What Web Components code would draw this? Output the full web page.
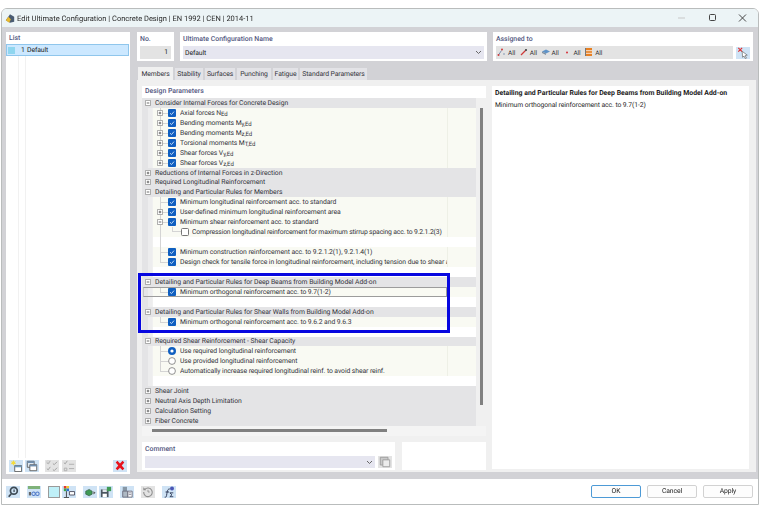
<!DOCTYPE html>
<html>
<head>
<meta charset="utf-8">
<title>Edit Ultimate Configuration</title>
<style>
  html, body { margin: 0; padding: 0; background: #fff; }
  body { font-family: Roboto, "Noto Sans", sans-serif; font-size: 6.8px; letter-spacing: -.08px; color: #33333b; text-rendering: geometricPrecision; }
  sub { font-size: 6px; vertical-align: -1px; line-height: 0; }
  tree-row[kind="head"] { letter-spacing: -.05px; }
  tree-row[level="2"] { letter-spacing: -.16px; }
</style>
</head>
<body>
<config-dialog>
  <list-panel slot="list"></list-panel>
  <tree-panel slot="tree">
    <tree-row kind="head" toggle="minus">Consider Internal Forces for Concrete Design</tree-row>
    <tree-row kind="check" toggle="plus">Axial forces N<sub>Ed</sub></tree-row>
    <tree-row kind="check" toggle="plus">Bending moments M<sub>y,Ed</sub></tree-row>
    <tree-row kind="check" toggle="plus">Bending moments M<sub>z,Ed</sub></tree-row>
    <tree-row kind="check" toggle="plus">Torsional moments M<sub>T,Ed</sub></tree-row>
    <tree-row kind="check" toggle="plus">Shear forces V<sub>y,Ed</sub></tree-row>
    <tree-row kind="check" toggle="plus" last>Shear forces V<sub>z,Ed</sub></tree-row>
    <tree-row kind="head" toggle="plus">Reductions of Internal Forces in z-Direction</tree-row>
    <tree-row kind="head" toggle="plus">Required Longitudinal Reinforcement</tree-row>
    <tree-row kind="head" toggle="minus">Detailing and Particular Rules for Members</tree-row>
    <tree-row kind="check">Minimum longitudinal reinforcement acc. to standard</tree-row>
    <tree-row kind="check" toggle="plus">User-defined minimum longitudinal reinforcement area</tree-row>
    <tree-row kind="check" toggle="minus">Minimum shear reinforcement acc. to standard</tree-row>
    <tree-row kind="uncheck" level="2">Compression longitudinal reinforcement for maximum stirrup spacing acc. to 9.2.1.2(3)</tree-row>
    <tree-row kind="blank" line></tree-row>
    <tree-row kind="check">Minimum construction reinforcement acc. to 9.2.1.2(1), 9.2.1.4(1)</tree-row>
    <tree-row kind="check" last>Design check for tensile force in longitudinal reinforcement, including tension due to shear a</tree-row>
    <tree-row kind="blank"></tree-row>
    <tree-row kind="head" toggle="minus">Detailing and Particular Rules for Deep Beams from Building Model Add-on</tree-row>
    <tree-row kind="check" last selected>Minimum orthogonal reinforcement acc. to 9.7(1-2)</tree-row>
    <tree-row kind="blank"></tree-row>
    <tree-row kind="head" toggle="minus">Detailing and Particular Rules for Shear Walls from Building Model Add-on</tree-row>
    <tree-row kind="check" last>Minimum orthogonal reinforcement acc. to 9.6.2 and 9.6.3</tree-row>
    <tree-row kind="blank"></tree-row>
    <tree-row kind="head" toggle="minus">Required Shear Reinforcement - Shear Capacity</tree-row>
    <tree-row kind="radio-on">Use required longitudinal reinforcement</tree-row>
    <tree-row kind="radio">Use provided longitudinal reinforcement</tree-row>
    <tree-row kind="radio" last>Automatically increase required longitudinal reinf. to avoid shear reinf.</tree-row>
    <tree-row kind="blank"></tree-row>
    <tree-row kind="head" toggle="plus">Shear Joint</tree-row>
    <tree-row kind="head" toggle="plus">Neutral Axis Depth Limitation</tree-row>
    <tree-row kind="head" toggle="plus">Calculation Setting</tree-row>
    <tree-row kind="head" toggle="plus">Fiber Concrete</tree-row>
  </tree-panel>
</config-dialog>

<script>
// toolbar glyphs, all on a 14x14 box
const ICONS = {
  fresh: '<path d="M5.5 6.500h8v7h-8z" fill="#fff" stroke="#555"/><path d="M5.5 6.500h8v2h-8z" fill="#6f9cc0"/><path d="M4 0l.9 2.100L7 1.400 5.700 3.200 7.300 5 5 4.700 4 6.800 3 4.700.7 5l1.600-1.800L1 1.400l2.100.7z" fill="#f5dc3c"/>',
  copy: '<path d="M1.500 1.500h8v7h-8z" fill="#dfe9f2" stroke="#555"/><path d="M1.500 1.500h8v2h-8z" fill="#6f8fb0"/><path d="M4.500 5.500h8v7h-8z" fill="#fff" stroke="#555"/><path d="M4.500 5.500h8v2h-8z" fill="#6f8fb0"/>',
  pages: '<path d="M1.500 1.500h9v9h-9z" fill="#c9c9c9" stroke="#9a9a9a"/><path d="M4.500 4.500h8v8h-8z" fill="#ececec" stroke="#9a9a9a"/>',
  checks: '<path d="M1 3l1.500 1.500L5 1M8 4l1.500 1.500L13 2M1 10l1.500 1.500L5 8M8 11l1.500 1.500L13 9" fill="none" stroke="#9a9a9a"/><path d="M1 1h3v3H1z" fill="none" stroke="#c4c4c4" stroke-width=".6"/>',
  unchecks: '<path d="M1 3l1.500 1.500L5 1" fill="none" stroke="#9a9a9a"/><path d="M7 5h6M1.500 9.500h3v3h-3zM7 10h6" fill="none" stroke="#ababab"/>',
  del: '<path d="M2 3l2-2 3 3 3-3 2 2-3 3.500 3 3.500-2 2-3-3-3 3-2-2 3-3.500z" fill="#e8121e"/>',
  search: '<circle cx="8" cy="5.500" r="4" fill="none" stroke="#3d4a55" stroke-width="2"/><path d="M5 9l-3 3.500" stroke="#3d4a55" stroke-width="2"/><path d="M7.500 4H9v3H7.500z" fill="#3d4a55"/>',
  units: '<path d="M0 0h14v3.500H0z" fill="#7fb27a"/><circle cx="6.500" cy="9" r="2" fill="none" stroke="#4e78c9" stroke-width="1.200"/><circle cx="11" cy="9" r="2" fill="none" stroke="#4e78c9" stroke-width="1.200"/><path d="M1 7h2.500v4H1z" fill="#666"/>',
  colors: '<path d="M1 0h3v3H1z" fill="#e8332a"/><path d="M4 0h3v3H4z" fill="#f2c92e"/><path d="M1 3h3v3H1z" fill="#3aa648"/><path d="M4 3h3v3H4z" fill="#2f6fd0"/><path d="M7.500 6.500h6v4h-6z" fill="#fff" stroke="#445"/><path d="M4 6v7M1 13.500h6" stroke="#333"/>',
  run: '<path d="M2 6l4-2 3.500 2v3.500L6 11.500 2 9.500z" fill="#3f9a55" stroke="#2b4f3a" stroke-width=".7"/><path d="M11 6l2.500 2-2.500 2z" fill="#555"/>',
  save: '<path d="M1 4h9v9H1z" fill="#4a5560"/><path d="M3 4h5v3H3z" fill="#dfe5ea"/><path d="M3 9h5v4H3z" fill="#fff"/><path d="M8 1h5v5H8z" fill="#3f9a55"/>',
  docs: '<path d="M2 1h5v5H2z" fill="#8797a5"/><path d="M2 6h6v7H2z" fill="#aeb9c4" stroke="#667"/><path d="M8 6h5v7H8z" fill="#fff" stroke="#667"/><path d="M9 8h3M9 10h3" stroke="#889"/>',
  reset: '<path d="M3.300 4A5 5 0 1 1 2 7" fill="none" stroke="#8f8f8f" stroke-width="1.300"/><path d="M1.500 1.500V5H5z" fill="#8f8f8f"/><path d="M7 4.500V7h2" fill="none" stroke="#8f8f8f"/>',
  formula: '<path d="M2 13c2 .5 2-1 2.500-4S5.500 3 8 3.500M3 7h4" fill="none" stroke="#26314f" stroke-width="1.100"/><path d="M12 8H8l2.500 2.200L8 12.500h4" fill="none" stroke="#26314f"/><circle cx="10.500" cy="3" r="2.300" fill="#4a55b5"/>',
  pick: '<path d="M1.500 1l4.500 4.500M6 1L1.500 5.500" stroke="#e02b2b" stroke-width="1.300"/><path d="M6 5l6 4.500-2.500.5 1.500 3-1.300.6-1.500-3L6.500 12z" fill="#fff" stroke="#666" stroke-width=".8"/>'
};

const TAGS = {
  member: '<path d="M1.500 7L4.500 2.500" stroke="#7a8fb0"/><circle cx="1.500" cy="7" r="1" fill="#cf3a3a"/><circle cx="5" cy="1.500" r="1" fill="#cf3a3a"/><circle cx="7" cy="6" r=".8" fill="#7a8fb0"/>',
  line: '<path d="M2 7l4.500-4.500" stroke="#cf3a3a" stroke-width="1.200"/><circle cx="7" cy="2" r="1" fill="#333"/>',
  surface: '<path d="M1 3.500l4-2 4 2-4 2z" fill="#5f93c7"/><path d="M1 3.500l4 2V7L1 5z" fill="#7f8fa0"/>',
  node: '<circle cx="5" cy="4.500" r="1" fill="#d6313a"/>',
  set: '<path d="M2 0h6v8H2z" fill="#e67f22"/><path d="M2 2.700h6M2 5.300h6" stroke="#fff" stroke-width=".8"/><path d="M1.500 0v8" stroke="#777"/>'
};

class IconButton extends HTMLElement {
  constructor() {
    super();
    this.attachShadow({ mode: 'open' });
    const bg = { blue: '#cfe3f5', gray: '#e3e3e3' }[this.getAttribute('tone') || 'blue'];
    this.shadowRoot.innerHTML = `
      <style>
        :host { display: inline-flex; width: 14px; height: 12px; align-items: center; justify-content: center; background: ${bg}; flex: none; }
        svg { width: 12px; height: 12px; display: block; }
      </style>
      <svg viewBox="0 0 14 14">${ICONS[this.getAttribute('icon')] || ''}</svg>`;
  }
}

class FieldBox extends HTMLElement {
  constructor() {
    super();
    this.attachShadow({ mode: 'open' });
    this.shadowRoot.innerHTML = `
      <style>
        :host { display: flex; flex-direction: column; background: #fff; padding: 2px 3px 2px 3px; box-sizing: border-box; height: 29px; }
        .label { font-weight: 500; font-size: 6.9px; letter-spacing: 0; color: #53587f; height: 12px; line-height: 10px; white-space: nowrap; }
        .body { flex: 1; display: flex; align-items: center; color: #222; min-width: 0; }
      </style>
      <div class="label">${this.getAttribute('label')}</div>
      <div class="body"><slot></slot></div>`;
  }
}

class ListPanel extends HTMLElement {
  constructor() {
    super();
    this.attachShadow({ mode: 'open' });
    this.shadowRoot.innerHTML = `
      <style>
        :host { display: flex; flex-direction: column; width: 124px; background: #fff; box-sizing: border-box; }
        .label { font-weight: 500; font-size: 6.9px; letter-spacing: 0; color: #53587f; padding: 2px 3px 0; height: 12px; box-sizing: border-box; line-height: 9px; }
        .rows { flex: 1; min-height: 0; }
        .sel { display: flex; align-items: center; height: 12px; box-sizing: border-box; background: #cce8ff; border: 1px solid #8fc6ec; color: #222; width: 123px; }
        .swatch { width: 7px; height: 7px; background: #8fd6ef; margin-left: 1px; }
        .num { margin-left: 6px; width: 3px; text-align: right; }
        .name { margin-left: 3px; }
        .guide { height: 402px; margin-left: 12px; width: 8px; border-left: 1px solid #f1f1f1; border-right: 1px solid #f1f1f1; box-sizing: border-box; }
        .tools { display: flex; align-items: flex-end; height: 19px; padding: 0 0 2px 3px; box-sizing: border-box; flex: none; }
        .tools icon-button { margin-right: 2px; }
        .tools .gap { margin-right: 6px; }
        .tools .c { margin-right: 3px; }
        .tools .far { margin-left: auto; margin-right: 3px; }
      </style>
      <div class="label">List</div>
      <div class="rows">
        <div class="sel"><span class="swatch"></span><span class="num">1</span><span class="name">Default</span></div>
        <div class="guide"></div>
      </div>
      <div class="tools">
        <icon-button icon="fresh"></icon-button>
        <icon-button class="gap" icon="copy"></icon-button>
        <icon-button class="c" icon="checks" tone="gray"></icon-button>
        <icon-button icon="unchecks" tone="gray"></icon-button>
        <icon-button class="far" icon="del"></icon-button>
      </div>`;
  }
}

class TreeRow extends HTMLElement {
  constructor() {
    super();
    this.attachShadow({ mode: 'open' });
    const kind = this.getAttribute('kind');
    const toggle = this.getAttribute('toggle');
    const level = this.getAttribute('level');
    const box = toggle
      ? `<svg class="tg" viewBox="0 0 7 7"><path d="M.5.500h6v6h-6z" fill="#fff" stroke="#9a9a9a"/><path d="M2 3.500h3${toggle === 'plus' ? 'M3.500 2v3' : ''}" stroke="#555"/></svg>`
      : '';
    const marks = {
      check: '<rect width="8" height="8" rx="1" fill="#0f5fc0"/><path d="M2 4.200l1.500 1.400L6 2.600" fill="none" stroke="#cfe3f8" stroke-width=".9"/>',
      uncheck: '<rect x=".5" y=".5" width="7" height="7" rx="1" fill="#fff" stroke="#777"/>',
      radio: '<circle cx="4" cy="4" r="3.400" fill="#fff" stroke="#777" stroke-width=".8"/>',
      'radio-on': '<circle cx="4" cy="4" r="4" fill="#0f5fc0"/><circle cx="4" cy="4" r="1.600" fill="#fff"/>'
    };
    const mark = marks[kind] ? `<svg class="mk" viewBox="0 0 8 8">${marks[kind]}</svg>` : '';
    this.shadowRoot.innerHTML = `
      <style>
        :host { display: block; height: 9.94px; }
        .row { display: flex; align-items: center; height: 100%; white-space: nowrap; box-sizing: border-box; }
        .row.head { background: #e4e4e6; padding-left: 3px; }
        .row.head .tg { margin-right: 4px; }
        .tg { width: 6px; height: 6px; flex: none; position: relative; }
        .stripe { width: 10px; align-self: stretch; background: #e4e4e6; flex: none; margin-right: 1px; box-sizing: border-box; border-right: 4px solid #ededee; }
        .cell { flex: 1; align-self: stretch; display: flex; align-items: center; background: #f9faf3; min-width: 0; position: relative; }
        .cell.blank { background: #fff; }
        .sl { width: 8px; flex: none; display: flex; align-items: center; margin-left: 4px; align-self: stretch; position: relative; }
        .v { position: absolute; left: 3px; top: 0; bottom: 0; width: 1px; background: #d4d4d4; }
        .last .v { bottom: 50%; }
        .h { position: absolute; left: 3px; top: 50%; width: 9px; height: 1px; background: #d4d4d4; }
        .mk { width: 8px; height: 8px; flex: none; margin-left: 3px; margin-right: 4px; position: relative; }
        .l2 .mk { margin-left: 16px; margin-right: 3px; }
        .l2 .h { display: none; }
        .k { position: absolute; left: 19px; width: 9px; top: 0; height: 50%; box-sizing: border-box; border-left: 1px solid #d4d4d4; border-bottom: 1px solid #d4d4d4; }
        .txt { width: 267px; overflow: hidden; flex: none; }
        .l2 .txt { width: 255px; }
        .tail { flex: 1; align-self: stretch; border-left: 1px solid #eef0e6; }
        .frame { position: absolute; left: -10px; right: 29px; top: 0; bottom: 0; border: 1px solid #9c9c9c; border-left-color: #c4c4c4; }
      </style>
      ${kind === 'head'
        ? `<div class="row head">${box}<span><slot></slot></span></div>`
        : `<div class="row"><span class="stripe"></span>
            <div class="cell ${kind === 'blank' ? 'blank' : ''} ${level === '2' ? 'l2' : ''} ${this.hasAttribute('last') ? 'last' : ''}">
              ${kind === 'blank'
                ? (this.hasAttribute('line') ? '<span class="sl"><i class="v"></i></span>' : '')
                : `<span class="sl"><i class="v"></i><i class="h"></i>${box}</span>${level === '2' ? '<i class="k"></i>' : ''}${mark}<span class="txt"><slot></slot></span><span class="tail"></span>`}
              ${this.hasAttribute('selected') ? '<span class="frame"></span>' : ''}
            </div></div>`}`;
  }
}

class TreePanel extends HTMLElement {
  constructor() {
    super();
    this.attachShadow({ mode: 'open' });
    this.shadowRoot.innerHTML = `
      <style>
        :host { display: flex; flex-direction: column; position: relative; width: 344px; height: 350px; flex: none; }
        .label { height: 12px; line-height: 11px; background: #fff; font-weight: 500; font-size: 6.9px; letter-spacing: 0; color: #53587f; padding-left: 3px; flex: none; }
        .wrap { display: flex; flex: 1; min-height: 0; }
        .tree { width: 334px; flex: none; }
        .vbar { width: 10px; flex: none; padding: 10px 0 0 4px; box-sizing: border-box; }
        .vbar i { display: block; width: 3px; height: 297px; background: #808080; }
        .hbar { height: 10px; flex: none; display: flex; align-items: center; padding: 0 0 2px 10px; box-sizing: border-box; background: #f4f4f4; }
        .hbar i { display: block; width: 235px; height: 3px; background: #808080; }
        .mark { position: absolute; left: -4px; top: 187px; width: 305.500px; height: 54px; border: 3px solid #0707e0; }
      </style>
      <div class="label">Design Parameters</div>
      <div class="wrap">
        <div class="tree"><slot></slot></div>
        <div class="vbar"><i></i></div>
      </div>
      <div class="hbar"><i></i></div>
      <div class="mark"></div>`;
  }
}

class ConfigDialog extends HTMLElement {
  constructor() {
    super();
    this.attachShadow({ mode: 'open' });
    const all = t => `<span class="tag"><svg viewBox="0 0 10 9">${TAGS[t]}</svg>All</span>`;
    const chevron = '<svg width="7" height="5" viewBox="0 0 7 5"><path d="M1 1l2.500 2.500L6 1" fill="none" stroke="#666"/></svg>';
    this.shadowRoot.innerHTML = `
      <style>
        :host { display: flex; flex-direction: column; margin: 8px 1px 0 1px; height: 497px; box-sizing: border-box; border: 1px solid #b9bcbc; border-top-left-radius: 6px; border-top-right-radius: 6px; overflow: hidden; background: #fff; filter: blur(.35px); }
        .title { height: 18px; flex: none; display: flex; align-items: center; background: #ecf4f6; font-size: 7.5px; letter-spacing: 0; color: #2a2a2a; padding-left: 3px; }
        .logo { width: 10px; height: 11px; margin-right: 2px; }
        .t { flex: 1; }
        .winb { display: flex; }
        .winb svg { width: 30px; height: 10px; display: block; }
        .main { flex: 1; min-height: 0; display: flex; background: #d2d2d6; padding: 5px 2px 5px 4px; gap: 7px; }
        .side { display: flex; }
        .col { flex: 1; min-width: 0; display: flex; flex-direction: column; }
        .top { display: flex; height: 29px; flex: none; gap: 6px; }
        .no { width: 37px; flex: none; }
        .val-no { width: 100%; height: 13px; background: #e3e3e3; text-align: right; padding-right: 3px; box-sizing: border-box; line-height: 13px; }
        .name { width: 307px; flex: none; }
        .combo { width: 100%; height: 13px; background: #e6e6f0; display: flex; align-items: center; justify-content: space-between; padding: 0 2px; box-sizing: border-box; }
        .assigned { width: 260px; flex: none; }
        .assignrow { width: 100%; display: flex; align-items: center; height: 13px; gap: 3px; }
        .tags { flex: 1; background: #e3e3e3; height: 13px; display: flex; align-items: center; padding-left: 1px; box-sizing: border-box; }
        .tag { display: inline-flex; align-items: center; width: 21.800px; color: #333; font-size: 6.500px; gap: 1px; }
        .tag svg { width: 10px; height: 9px; }
        .tabs { display: flex; height: 13px; margin-top: 6px; flex: none; padding-left: 1px; align-items: flex-end; }
        .tabs span { height: 12px; background: #e3e3e7; margin-right: 2px; line-height: 13px; white-space: nowrap; text-align: center; }
        .tabs span.on { background: #f0f0f0; height: 13px; line-height: 14px; }
        .panel { flex: 1; min-height: 0; background: #f0f0f0; padding: 6px 7px 3px 5px; display: flex; gap: 6px; box-sizing: border-box; margin-bottom: 2px; }
        .lcol { width: 344px; flex: none; display: flex; flex-direction: column; }
        .rcol { flex: 1; background: #fff; padding: 2px 3px; color: #2a2a2a; white-space: nowrap; }
        .rcol b { display: block; font-weight: 700; font-size: 6.9px; letter-spacing: 0; height: 13px; color: #1d1d1d; line-height: 10px; }
        .bottom { display: flex; height: 28px; margin-top: 6px; gap: 7px; flex: none; }
        .comment { width: 253px; flex: none; height: 28px; }
        .cm-row { display: flex; gap: 3px; width: 100%; height: 12px; align-items: center; }
        .cm-row .combo { flex: 1; width: auto; height: 12px; }
        .empty { flex: 1; background: #fff; }
        .foot { height: 25px; flex: none; display: flex; align-items: center; padding-left: 4px; background: #fff; }
        .ic { display: flex; align-items: center; }
        .ic > * { margin-right: 7px; }
        .ic .n { margin-right: 2px; }
        .swatch { width: 12px; height: 12px; box-sizing: border-box; border: 1px solid #9a9a9a; background: #bff0f8; flex: none; }
        .btns { margin-left: auto; display: flex; gap: 6px; margin-right: 5px; }
        .btns span { width: 50px; height: 13px; line-height: 11px; border: 1px solid #d2d2d2; border-radius: 2px; text-align: center; box-sizing: border-box; color: #222; background: #fdfdfd; }
        .btns span.ok { border-color: #4d9ad6; }
      </style>
      <div class="title">
        <svg class="logo" viewBox="0 0 12 12"><path d="M1 8L6 1l5 3v6L6 11z" fill="#4a5c72"/><path d="M1 8l3-4 3 3-2 4z" fill="#e8b92c"/></svg>
        <span class="t">Edit Ultimate Configuration | Concrete Design | EN 1992 | CEN | 2014-11</span>
        <span class="winb"><svg viewBox="0 0 30 10"><path d="M10 5h7" stroke="#c8c8c8"/></svg><svg viewBox="0 0 30 10"><rect x="11.500" y="1.500" width="6" height="6" rx="1" fill="none" stroke="#444"/></svg><svg viewBox="0 0 30 10"><path d="M11 1.500l7 7M18 1.500l-7 7" stroke="#444"/></svg></span>
      </div>
      <div class="main">
        <div class="side"><slot name="list"></slot></div>
        <div class="col">
          <div class="top">
            <field-box class="no" label="No."><div class="val-no">1</div></field-box>
            <field-box class="name" label="Ultimate Configuration Name"><div class="combo"><span>Default</span>${chevron}</div></field-box>
            <field-box class="assigned" label="Assigned to"><div class="assignrow"><div class="tags">${all('member')}${all('line')}${all('surface')}${all('node')}${all('set')}</div><icon-button icon="pick"></icon-button></div></field-box>
          </div>
          <div class="tabs"><span class="on" style="width:35px">Members</span><span style="width:28px">Stability</span><span style="width:30px">Surfaces</span><span style="width:34px">Punching</span><span style="width:25px">Fatigue</span><span style="width:67px">Standard Parameters</span></div>
          <div class="panel">
            <div class="lcol">
              <slot name="tree"></slot>
              <div class="bottom">
                <field-box class="comment" label="Comment"><div class="cm-row"><div class="combo"><span></span>${chevron}</div><icon-button icon="pages" tone="gray"></icon-button></div></field-box>
                <div class="empty"></div>
              </div>
            </div>
            <div class="rcol"><b>Detailing and Particular Rules for Deep Beams from Building Model Add-on</b>Minimum orthogonal reinforcement acc. to 9.7(1-2)</div>
          </div>
        </div>
      </div>
      <div class="foot">
        <div class="ic">
          <icon-button icon="search"></icon-button>
          <icon-button icon="units"></icon-button>
          <span class="swatch n"></span>
          <icon-button icon="colors"></icon-button>
          <icon-button class="n" icon="run"></icon-button>
          <icon-button icon="save"></icon-button>
          <icon-button icon="docs"></icon-button>
          <icon-button icon="reset" tone="gray"></icon-button>
          <icon-button icon="formula"></icon-button>
        </div>
        <div class="btns"><span class="ok">OK</span><span>Cancel</span><span>Apply</span></div>
      </div>`;
  }
}

customElements.define('icon-button', IconButton);
customElements.define('field-box', FieldBox);
customElements.define('list-panel', ListPanel);
customElements.define('tree-row', TreeRow);
customElements.define('tree-panel', TreePanel);
customElements.define('config-dialog', ConfigDialog);
</script>
</body>
</html>
